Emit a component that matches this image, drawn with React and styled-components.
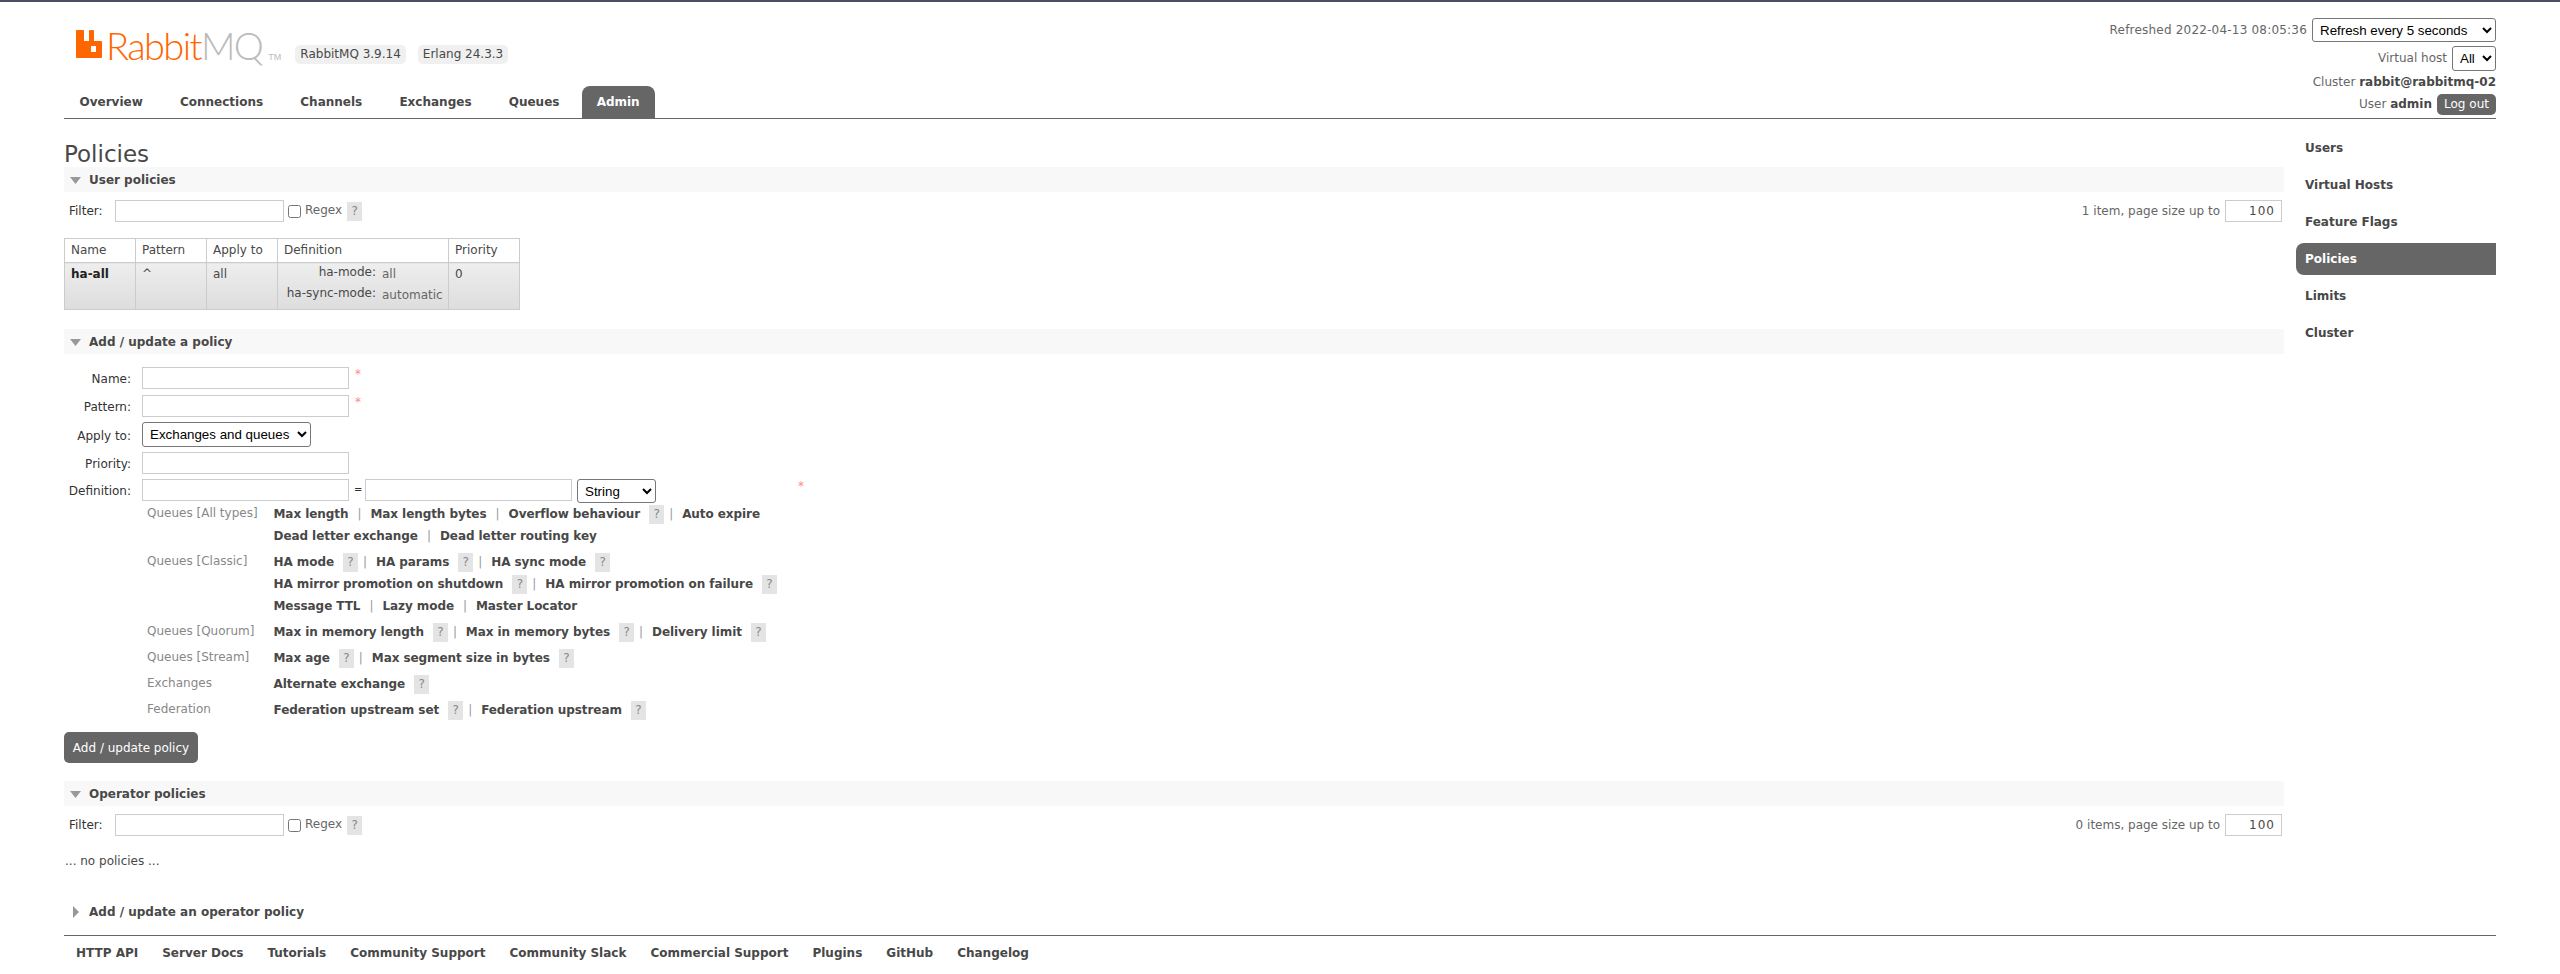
import React from 'react'
import styled, { createGlobalStyle } from 'styled-components'

const GlobalStyle = createGlobalStyle`
    html, body {
        margin: 0;
        padding: 0;
        background: #fff;
    }
    body {
        font: 12px "DejaVu Sans", Verdana, sans-serif;
        color: #484848;
    }
    * {
        box-sizing: border-box;
    }
`;

const Page = styled.div`
    border-top: 2px solid #4b4f62;
    padding: 0 64px;
    height: 974px;
    overflow: hidden;
`;

const Header = styled.header`
    display: flex;
    justify-content: space-between;
    height: 117px;
    border-bottom: 1px solid #666;
`;

const Brand = styled.div`
    display: flex;
    flex-direction: column;
    justify-content: space-between;
`;

const LogoRow = styled.div`
    display: flex;
    align-items: flex-start;
    padding: 28px 0 0 12px;
`;

const LogoName = styled.div`
    display: flex;
    align-items: baseline;
    margin: -4px 0 0 4px;
    font: 300 38px/38px Lato, sans-serif;
    letter-spacing: -1.6px;
    color: #f60;
    height: 38px;
`;

const LogoMq = styled.span`
    color: #bbb;
`;

const LogoTm = styled.span`
    font: 400 9px/9px "Liberation Sans", sans-serif;
    letter-spacing: 0;
    color: #bbb;
    margin-left: 6px;
`;

const Version = styled.span`
    display: inline-block;
    margin: 15px 0 0 ${props => props.$left}px;
    padding: 0 5px;
    height: 19px;
    line-height: 19px;
    background: #f0f0f0;
    border-radius: 5px;
`;

const Tabs = styled.nav`
    display: flex;
    gap: 7.2px;
    padding-left: 0.5px;
`;

const Tab = styled.a`
    display: block;
    height: 32px;
    line-height: 33px;
    padding: 0 15px;
    font-weight: bold;
    border-radius: 8px 8px 0 0;
    color: ${props => props.$active ? '#fff' : '#484848'};
    background: ${props => props.$active ? '#666' : 'transparent'};
`;

const Status = styled.div`
    display: flex;
    flex-direction: column;
    align-items: flex-end;
    padding-top: 14px;
`;

const StatusRow = styled.div`
    display: flex;
    align-items: center;
    justify-content: flex-end;
    gap: 5px;
    height: ${props => props.$height}px;
    color: #666;

    b {
        color: #484848;
    }
`;

const Refreshed = styled.span`
    letter-spacing: 0.2px;
`;

const Select = styled.select`
    width: ${props => props.$width}px;
    height: ${props => props.$height}px;
    padding-left: 3px;
    font: 13.33px "Liberation Sans", Arial, sans-serif;
    color: #000;
    background: #fff;
    border: 1px solid #767676;
    border-radius: 3px;
`;

const LogOut = styled.button`
    height: 21px;
    width: 59px;
    padding: 0;
    border: 0;
    border-radius: 5px;
    background: #666;
    color: #fff;
    font: 12px "DejaVu Sans", Verdana, sans-serif;
`;

const Body = styled.div`
    display: flex;
    gap: 12px;
`;

const Main = styled.main`
    width: 2220px;
`;

const Title = styled.h1`
    margin: 0;
    height: 48px;
    padding-top: 22px;
    font-size: 23px;
    line-height: 26px;
    font-weight: normal;
`;

const SectionBar = styled.h2`
    display: flex;
    align-items: center;
    gap: 8px;
    height: 25px;
    margin: ${props => props.$top || 0}px 0 0;
    padding-left: 6px;
    font-size: 12px;
    font-weight: bold;
    background: ${props => props.$plain ? 'transparent' : '#f8f8f8'};
`;

const Arrow = styled.svg`
    display: block;
    width: 11px;
    height: 12px;
    flex: none;
`;

const FilterRow = styled.div`
    display: flex;
    align-items: center;
    margin-top: 8px;
    padding-left: 5px;
    height: 22px;
`;

const FilterLabel = styled.label`
    width: 46px;
    color: #333;
`;

const TextInput = styled.input`
    display: block;
    width: ${props => props.$width || 207}px;
    height: 22px;
    padding: 0 6px;
    background: #fff;
    border: 1px solid #ccc;
    font: 12px "DejaVu Sans", Verdana, sans-serif;
    color: #484848;
    text-align: ${props => props.$right ? 'right' : 'left'};
    letter-spacing: ${props => props.$right ? '1px' : '0'};
`;

const Check = styled.input`
    width: 13px;
    height: 13px;
    margin: 0 4px 0 4px;
`;

const Regex = styled.span`
    color: #666;
    margin-top: -2px;
`;

const Help = styled.span`
    display: inline-block;
    width: 15px;
    height: 19px;
    line-height: 19px;
    margin-left: ${props => props.$left || 9}px;
    text-align: center;
    font-weight: normal;
    background: #e4e4e4;
    color: #888;
`;

const PageSize = styled.div`
    display: flex;
    align-items: center;
    gap: 5px;
    margin-left: auto;
    margin-right: 2px;
    color: #666;
`;

const Table = styled.table`
    margin: 16px 0 0;
    border-collapse: collapse;
    table-layout: fixed;
    width: 455px;

    th, td {
        border: 1px solid #ccc;
        padding: 0 6px;
        text-align: left;
        vertical-align: top;
        font-weight: normal;
    }
    th {
        height: 23px;
        line-height: 23px;
    }
    td {
        height: 47px;
        line-height: 20px;
        padding-top: 1px;
        background: linear-gradient(#eee, #ddd);
    }
`;

const Name = styled.b`
    color: #222;
`;

const DefGrid = styled.div`
    display: grid;
    grid-template-columns: 92px auto;
    column-gap: 6px;
    line-height: 21px;
`;

const DefKey = styled.span`
    text-align: right;
    margin-top: -2px;
`;

const DefValue = styled.span`
    color: #666;
`;

const Form = styled.form`
    margin-top: 13px;
`;

const FormRow = styled.div`
    display: grid;
    grid-template-columns: 67px auto 1fr;
    column-gap: 11px;
    align-items: center;
    margin-bottom: ${props => props.$bottom ?? 5}px;
`;

const FormLabel = styled.label`
    text-align: right;
    color: #333;
    padding-top: ${props => props.$top ?? 2}px;
`;

const Required = styled.span`
    color: #f88;
    align-self: start;
    margin-left: -5px;
`;

const DefinitionInputs = styled.div`
    display: flex;
    align-items: flex-start;
    gap: 5px;
`;

const Equals = styled.span`
    width: 6px;
    font-size: 10px;
    line-height: 22px;
    text-align: center;
    color: #333;
`;

const Asterisk = styled.span`
    color: #f88;
    margin-left: 137px;
`;

const Groups = styled.div`
    margin: 0 0 0 83px;
`;

const Group = styled.div`
    display: grid;
    grid-template-columns: 126.5px 1fr;
    margin-bottom: 4px;
`;

const GroupName = styled.div`
    color: #888;
    line-height: 20px;
`;

const LinkLine = styled.div`
    display: flex;
    align-items: center;
    height: 22px;
    font-weight: bold;
    letter-spacing: -0.07px;
`;

const Sep = styled.span`
    font-weight: normal;
    color: #999;
    margin: 0 9px 0 ${props => props.$tight ? 5 : 9}px;
`;

const Submit = styled.button`
    display: block;
    margin-top: 11px;
    width: 134px;
    height: 31px;
    padding: 0;
    border: 0;
    border-radius: 5px;
    background: #666;
    color: #fff;
    font: 12px "DejaVu Sans", Verdana, sans-serif;
`;

const NoPolicies = styled.p`
    margin: 17px 0 0 1px;
    line-height: 16px;
`;

const Side = styled.ul`
    list-style: none;
    margin: 13px 0 0;
    padding: 0;
    width: 200px;
`;

const SideItem = styled.li`
    height: 32px;
    line-height: 33px;
    margin-bottom: 5px;
    padding-left: 9px;
    font-weight: bold;
    border-radius: 8px 0 0 8px;
    color: ${props => props.$active ? '#fff' : '#484848'};
    background: ${props => props.$active ? '#666' : 'transparent'};
`;

const Footer = styled.footer`
    margin-top: 11px;
    border-top: 1px solid #666;
    display: flex;
    gap: 24px;
    padding: 9px 0 0 12px;
    font-weight: bold;
    line-height: 16px;
`;

const tabs = ['Overview', 'Connections', 'Channels', 'Exchanges', 'Queues', 'Admin'];
const sideItems = ['Users', 'Virtual Hosts', 'Feature Flags', 'Policies', 'Limits', 'Cluster'];
const footerLinks = ['HTTP API', 'Server Docs', 'Tutorials', 'Community Support', 'Community Slack', 'Commercial Support', 'Plugins', 'GitHub', 'Changelog'];

// h marks a link that has a help badge after it
const groups = [
    ['Queues [All types]', [
        [['Max length'], ['Max length bytes'], ['Overflow behaviour', 'h'], ['Auto expire']],
        [['Dead letter exchange'], ['Dead letter routing key']],
    ]],
    ['Queues [Classic]', [
        [['HA mode', 'h'], ['HA params', 'h'], ['HA sync mode', 'h']],
        [['HA mirror promotion on shutdown', 'h'], ['HA mirror promotion on failure', 'h']],
        [['Message TTL'], ['Lazy mode'], ['Master Locator']],
    ]],
    ['Queues [Quorum]', [
        [['Max in memory length', 'h'], ['Max in memory bytes', 'h'], ['Delivery limit', 'h']],
    ]],
    ['Queues [Stream]', [
        [['Max age', 'h'], ['Max segment size in bytes', 'h']],
    ]],
    ['Exchanges', [
        [['Alternate exchange', 'h']],
    ]],
    ['Federation', [
        [['Federation upstream set', 'h'], ['Federation upstream', 'h']],
    ]],
];

const Logo = () => (
    <svg width="26" height="28" viewBox="0 0 26 28" style={{ display: 'block', flex: 'none' }}>
        <path fill="#f60" fillRule="evenodd" d="M1 0H7a1 1 0 0 1 1 1V11H13V1a1 1 0 0 1 1-1H17a1 1 0 0 1 1 1V11H25a1 1 0 0 1 1 1V27a1 1 0 0 1-1 1H1a1 1 0 0 1-1-1V1a1 1 0 0 1 1-1ZM15 16V22H20V16Z" />
    </svg>
);

const ArrowDown = () => (
    <Arrow viewBox="0 0 11 12"><path fill="#999" d="M0 3H11L5.5 10Z" /></Arrow>
);

const ArrowRight = () => (
    <Arrow viewBox="0 0 11 12"><path fill="#999" d="M3 0L9 6L3 12Z" /></Arrow>
);

const Filter = ({ summary }) => (
    <FilterRow>
        <FilterLabel>Filter:</FilterLabel>
        <TextInput $width={169} />
        <Check type="checkbox" />
        <Regex>Regex</Regex>
        <Help $left={5}>?</Help>
        <PageSize>
            {summary}
            <TextInput $width={57} $right defaultValue="100" />
        </PageSize>
    </FilterRow>
);

const App = () => {
    return (
        <Page>
            <GlobalStyle />
            <Header>
                <Brand>
                    <LogoRow>
                        <Logo />
                        <LogoName>Rabbit<LogoMq>MQ</LogoMq><LogoTm>TM</LogoTm></LogoName>
                        <Version $left={14}>RabbitMQ 3.9.14</Version>
                        <Version $left={12}>Erlang 24.3.3</Version>
                    </LogoRow>
                    <Tabs>
                        {tabs.map(t => <Tab key={t} $active={t === 'Admin'}>{t}</Tab>)}
                    </Tabs>
                </Brand>
                <Status>
                    <StatusRow $height={28}>
                        <Refreshed>Refreshed 2022-04-13 08:05:36</Refreshed>
                        <Select $width={184} $height={24} defaultValue="5">
                            <option value="5">Refresh every 5 seconds</option>
                        </Select>
                    </StatusRow>
                    <StatusRow $height={28}>
                        Virtual host
                        <Select $width={44} $height={25} defaultValue="all">
                            <option value="all">All</option>
                        </Select>
                    </StatusRow>
                    <StatusRow $height={20}>
                        <span>Cluster <b>rabbit@rabbitmq-02</b></span>
                    </StatusRow>
                    <StatusRow $height={24}>
                        <span>User <b>admin</b></span>
                        <LogOut>Log out</LogOut>
                    </StatusRow>
                </Status>
            </Header>
            <Body>
                <Main>
                    <Title>Policies</Title>
                    <SectionBar><ArrowDown />User policies</SectionBar>
                    <Filter summary="1 item, page size up to" />
                    <Table>
                        <colgroup>
                            <col width="71" /><col width="71" /><col width="71" /><col width="171" /><col width="71" />
                        </colgroup>
                        <thead>
                            <tr><th>Name</th><th>Pattern</th><th>Apply to</th><th>Definition</th><th>Priority</th></tr>
                        </thead>
                        <tbody>
                            <tr>
                                <td><Name>ha-all</Name></td>
                                <td>^</td>
                                <td>all</td>
                                <td>
                                    <DefGrid>
                                        <DefKey>ha-mode:</DefKey><DefValue>all</DefValue>
                                        <DefKey>ha-sync-mode:</DefKey><DefValue>automatic</DefValue>
                                    </DefGrid>
                                </td>
                                <td>0</td>
                            </tr>
                        </tbody>
                    </Table>
                    <SectionBar $top={19}><ArrowDown />Add / update a policy</SectionBar>
                    <Form>
                        <FormRow $bottom={6}>
                            <FormLabel>Name:</FormLabel><TextInput /><Required>*</Required>
                        </FormRow>
                        <FormRow>
                            <FormLabel>Pattern:</FormLabel><TextInput /><Required>*</Required>
                        </FormRow>
                        <FormRow>
                            <FormLabel>Apply to:</FormLabel>
                            <Select $width={169} $height={25} defaultValue="all">
                                <option value="all">Exchanges and queues</option>
                            </Select>
                        </FormRow>
                        <FormRow>
                            <FormLabel>Priority:</FormLabel><TextInput />
                        </FormRow>
                        <FormRow $bottom={0}>
                            <FormLabel $top={0}>Definition:</FormLabel>
                            <DefinitionInputs>
                                <TextInput />
                                <Equals>=</Equals>
                                <TextInput />
                                <Select $width={79} $height={24} defaultValue="string">
                                    <option value="string">String</option>
                                </Select>
                                <Asterisk>*</Asterisk>
                            </DefinitionInputs>
                        </FormRow>
                        <Groups>
                            {groups.map(([name, lines]) => (
                                <Group key={name}>
                                    <GroupName>{name}</GroupName>
                                    <div>
                                        {lines.map((line, i) => (
                                            <LinkLine key={i}>
                                                {line.map(([label, help], j) => (
                                                    <React.Fragment key={label}>
                                                        {j > 0 && <Sep $tight={line[j - 1][1]}>|</Sep>}
                                                        {label}
                                                        {help && <Help>?</Help>}
                                                    </React.Fragment>
                                                ))}
                                            </LinkLine>
                                        ))}
                                    </div>
                                </Group>
                            ))}
                        </Groups>
                        <Submit type="button">Add / update policy</Submit>
                    </Form>
                    <SectionBar $top={18}><ArrowDown />Operator policies</SectionBar>
                    <Filter summary="0 items, page size up to" />
                    <NoPolicies>... no policies ...</NoPolicies>
                    <SectionBar $top={30} $plain><ArrowRight />Add / update an operator policy</SectionBar>
                </Main>
                <Side>
                    {sideItems.map(s => <SideItem key={s} $active={s === 'Policies'}>{s}</SideItem>)}
                </Side>
            </Body>
            <Footer>
                {footerLinks.map(f => <span key={f}>{f}</span>)}
            </Footer>
        </Page>
    );
}

export default App;
